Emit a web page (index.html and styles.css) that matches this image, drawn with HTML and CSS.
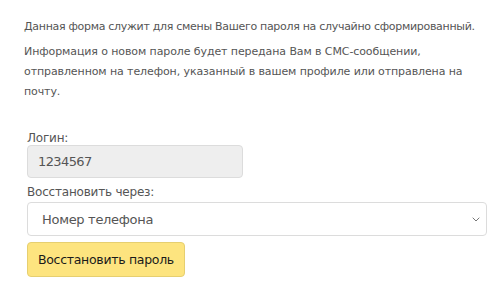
FILE: index.html
```html
<!DOCTYPE html>
<html lang="ru">
<head>
  <meta charset="UTF-8">
  <meta name="viewport" content="width=device-width, initial-scale=1.0">
  <title>Восстановление пароля</title>
  <link rel="stylesheet" href="styles.css">
</head>
<body>
  <div class="page">
    <p class="info info-lead">Данная форма служит для смены Вашего пароля на случайно сформированный.</p>
    <p class="info">Информация о новом пароле будет передана Вам в СМС-сообщении, отправленном на телефон, указанный в вашем профиле или отправлена на почту.</p>

    <form class="restore-form">
      <label class="field-label" for="login">Логин:</label>
      <input id="login" class="field field-short" type="text" value="1234567" readonly>

      <label class="field-label" for="method">Восстановить через:</label>
      <div class="select-wrap">
        <select id="method" class="field">
          <option>Номер телефона</option>
          <option>Электронная почта</option>
        </select>
        <svg class="select-arrow" width="8" height="5" viewBox="0 0 8 5"><path d="M0.7 0.7L4 4L7.3 0.7" fill="none" stroke="#777" stroke-width="1"/></svg>
      </div>

      <button type="button" class="btn-restore">Восстановить пароль</button>
    </form>
  </div>
</body>
</html>
```

FILE: styles.css
```css
body {
  margin: 0;
  background: #fff;
  font-family: "DejaVu Sans", Verdana, sans-serif;
  color: #555;
}

.page {
  padding: 17px 10px 0 24px;
}

.info {
  margin: 0;
  font-size: 11px;
  line-height: 20px;
  letter-spacing: -0.1px;
}

.info + .info {
  margin-top: 5px;
}

/* первая строка в Tahoma уже, поджимаем */
.info-lead {
  letter-spacing: -0.3px;
}

.restore-form {
  display: flex;
  flex-direction: column;
  align-items: flex-start;
  padding: 29px 3px 0 3px;
}

.field-label {
  font-size: 12px;
  line-height: 14px;
  letter-spacing: -0.2px;
}

.field {
  box-sizing: border-box;
  height: 34px;
  border: 1px solid #dcdcdc;
  border-radius: 4px;
  padding: 0 10px;
  font-family: inherit;
  font-size: 13px;
  letter-spacing: -0.3px;
  color: #555;
  background: #fff;
  outline: none;
}

.field-short {
  width: 216px;
  height: 33px;
  background: #eee;
  letter-spacing: -0.6px;
  margin-bottom: 7px;
}

.select-wrap {
  position: relative;
  align-self: stretch;
  margin-top: 3px;
  margin-bottom: 6px;
}

.select-wrap .field {
  width: 100%;
  -webkit-appearance: none;
  appearance: none;
  padding-left: 14px;
}

.select-arrow {
  position: absolute;
  right: 7px;
  top: 15px;
}

.btn-restore {
  height: 35px;
  padding: 0 10px;
  border: 1px solid #e6cf70;
  border-radius: 4px;
  background: #fde47f;
  color: #1a1a1a;
  font-family: inherit;
  font-size: 12.5px;
  letter-spacing: -0.3px;
  cursor: pointer;
}
```
